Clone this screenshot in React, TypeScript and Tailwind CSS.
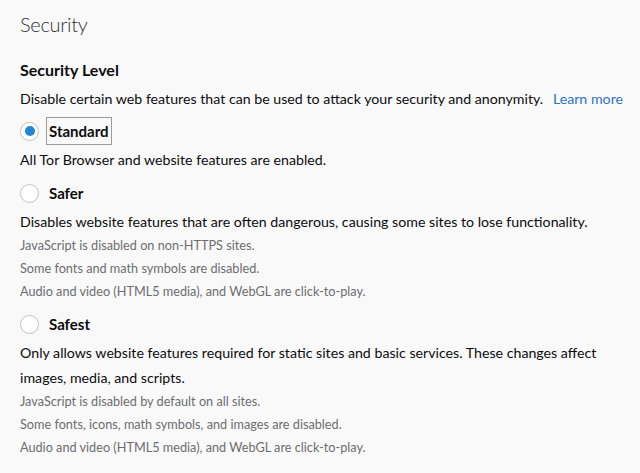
import { ReactNode } from "react"

const body = "text-[14.2px] leading-[25px] text-[#0c0c0d]"
const note = "text-[12.7px] leading-[23px] text-[#6d6d6e]"

function Radio({ checked, label, focused }: { checked?: boolean; label: string; focused?: boolean }) {
    return (
        <div className="flex h-[28px] items-center">
            <span className="flex h-[19px] w-[19px] items-center justify-center rounded-full border border-[#c3c3c5] bg-white">
                {checked && <span className="h-[10px] w-[10px] rounded-full bg-[#1f86d6]" />}
            </span>
            <span
                className={
                    "ml-[7px] flex h-[28px] items-center px-[2px] text-[15px] font-bold text-[#0c0c0d] " +
                    (focused ? "border border-[#9a9a9a]" : "border border-transparent")
                }
            >
                {label}
            </span>
        </div>
    )
}

function Level({ children }: { children: ReactNode }) {
    return <div className="flex flex-col">{children}</div>
}

export default function App() {
    return (
        <div
            className="min-h-[473px] w-full bg-[#f9f9fa] pl-[20px] pr-[17px]"
            style={{ fontFamily: 'Lato, "Open Sans", sans-serif' }}
        >
            <h1 className="pt-[9px] text-[20px] font-light leading-[30px] tracking-[-0.3px] text-[#333]">Security</h1>
            <h2 className="mt-[19px] text-[16px] font-bold leading-[24px] text-[#0c0c0d]">Security Level</h2>
            <p className={"mt-[4px] flex justify-between whitespace-nowrap " + body}>
                <span>Disable certain web features that can be used to attack your security and anonymity.</span>
                <a className="text-[#2d74c4]">Learn more</a>
            </p>

            <Level>
                <div className="mt-[6px]">
                    <Radio checked focused label="Standard" />
                </div>
                <p className={"mt-[2px] " + body}>All Tor Browser and website features are enabled.</p>
            </Level>

            <Level>
                <div className="mt-[7px]">
                    <Radio label="Safer" />
                </div>
                <p className={"mt-[2px] " + body}>
                    Disables website features that are often dangerous, causing some sites to lose functionality.
                </p>
                <p className={note}>JavaScript is disabled on non-HTTPS sites.</p>
                <p className={note}>Some fonts and math symbols are disabled.</p>
                <p className={note}>Audio and video (HTML5 media), and WebGL are click-to-play.</p>
            </Level>

            <Level>
                <div className="mt-[7px]">
                    <Radio label="Safest" />
                </div>
                <p className={"mt-[2px] " + body}>
                    Only allows website features required for static sites and basic services. These changes affect
                    images, media, and scripts.
                </p>
                <p className={note}>JavaScript is disabled by default on all sites.</p>
                <p className={note}>Some fonts, icons, math symbols, and images are disabled.</p>
                <p className={note}>Audio and video (HTML5 media), and WebGL are click-to-play.</p>
            </Level>
        </div>
    )
}
